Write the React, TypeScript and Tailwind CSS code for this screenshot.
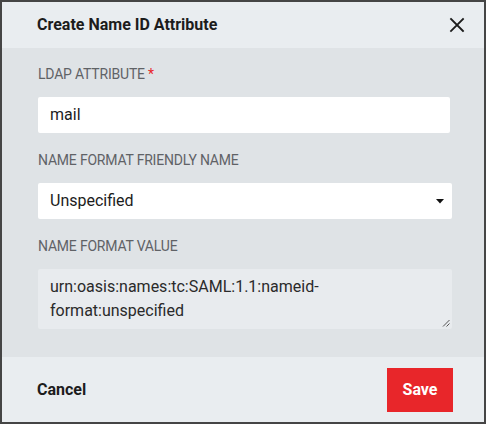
import React from "react";

export default function App() {
  return (
    <div
      className="w-[486px] h-[424px] border-2 border-[#454545] bg-[#e9edf0] flex flex-col"
      style={{ fontFamily: "Roboto, 'Liberation Sans', sans-serif" }}
    >
      <div className="h-[46px] shrink-0 flex items-center justify-between pl-[35px] pr-[18px] bg-[#e9edf0]">
        <h1 className="text-[16px] font-bold text-[#1c1c1c] leading-none">Create Name ID Attribute</h1>
        <button className="w-[18px] h-[18px] flex items-center justify-center text-[#1c1c1c]">
          <svg width="16" height="16" viewBox="0 0 16 16" fill="none" stroke="currentColor" strokeWidth="1.8" strokeLinecap="square">
            <path d="M2 2 L14 14 M14 2 L2 14" />
          </svg>
        </button>
      </div>
      <div className="h-[309px] shrink-0 bg-[#dfe3e6] pl-[36px] pr-[32px] pt-[16px] flex flex-col">
        <label className="text-[14px] tracking-[-0.2px] leading-[20px] text-[#5f6266] uppercase">
          LDAP Attribute <span className="text-[#e8262a]">*</span>
        </label>
        <div className="mt-[13px] h-[36px] w-[412px] bg-white rounded-[2px] flex items-center px-[12px] text-[16px] text-[#1c1c1c]">
          mail
        </div>
        <label className="mt-[17px] text-[14px] tracking-[-0.2px] leading-[20px] text-[#5f6266] uppercase">
          Name Format Friendly Name
        </label>
        <div className="mt-[13px] h-[36px] w-[414px] bg-white rounded-[2px] flex items-center justify-between pl-[12px] pr-[8px] text-[16px] text-[#1c1c1c]">
          <span>Unspecified</span>
          <svg width="8" height="5" viewBox="0 0 8 5">
            <path d="M0 0 L8 0 L4 4.5 Z" fill="#111" />
          </svg>
        </div>
        <label className="mt-[17px] text-[14px] tracking-[-0.2px] leading-[20px] text-[#5f6266] uppercase">
          Name Format Value
        </label>
        <div className="relative mt-[13px] h-[60px] w-[414px] bg-[#e8ebee] rounded-[2px] px-[12px] pt-[6px] text-[16px] leading-[24px] text-[#2a2a2a]">
          urn:oasis:names:tc:SAML:1.1:nameid-format:unspecified
          <svg className="absolute right-[2px] bottom-[2px]" width="8" height="8" viewBox="0 0 8 8" stroke="#555" strokeWidth="1">
            <path d="M1 7.5 L7.5 1 M4.5 7.5 L7.5 4.5" />
          </svg>
        </div>
      </div>
      <div className="flex-1 bg-[#e9edf0] flex items-center justify-between pl-[35px] pr-[31px]">
        <button className="text-[16px] font-bold text-[#1c1c1c]">Cancel</button>
        <button className="w-[66px] h-[44px] bg-[#e8262a] text-white text-[16px] font-bold">Save</button>
      </div>
    </div>
  );
}
